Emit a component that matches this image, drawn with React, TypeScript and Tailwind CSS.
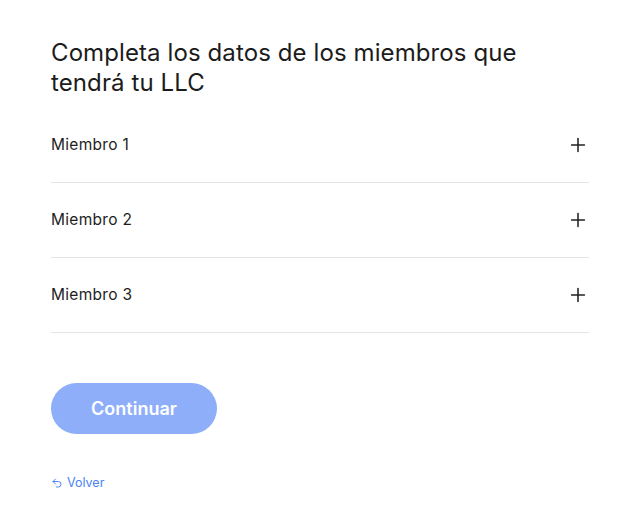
import React from 'react'
import { Plus, Undo2 } from 'lucide-react'

const members = ['Miembro 1', 'Miembro 2', 'Miembro 3']

export default function App() {
  return (
    <div
      className="min-h-[520px] w-full bg-white px-[51px] pt-[38px] text-[#1c1c1c]"
      style={{ fontFamily: 'Inter, "Noto Sans", sans-serif' }}
    >
      <h1 className="text-[24px] leading-[30px] font-normal tracking-[0.1px]">
        Completa los datos de los miembros que tendrá tu LLC
      </h1>

      <div className="mt-[10px] w-[538px]">
        {members.map((m) => (
          <div
            key={m}
            className="flex h-[75px] items-center justify-between border-b border-[#e4e4e4]"
          >
            <span className="text-[15.5px] font-normal tracking-[0.3px] text-[#1e1e1e]">{m}</span>
            <Plus size={22} strokeWidth={1.7} className="text-[#222]" />
          </div>
        ))}
      </div>

      <button className="mt-[50px] flex h-[51px] w-[166px] items-center justify-center rounded-full bg-[#8eaefa] text-[18px] font-semibold text-white">
        Continuar
      </button>

      <a className="mt-[40px] flex items-center gap-[4px] text-[12.5px] text-[#4a84f5]">
        <Undo2 size={12} strokeWidth={2} />
        Volver
      </a>
    </div>
  )
}
